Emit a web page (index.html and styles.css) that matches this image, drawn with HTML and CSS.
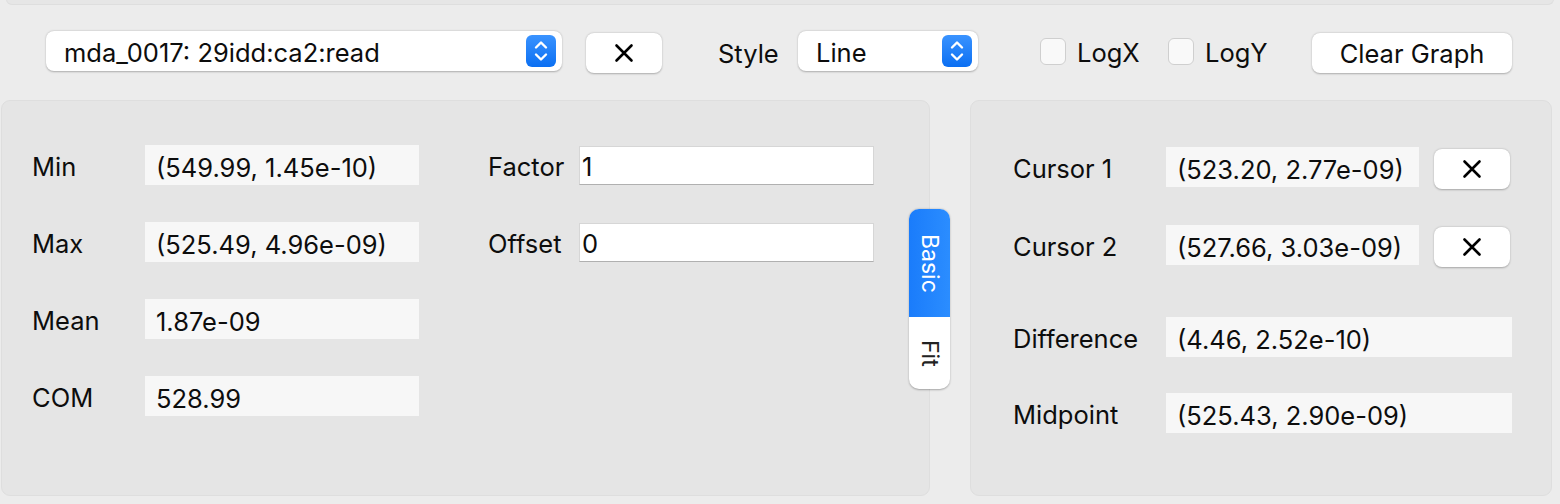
FILE: index.html
```html
<!DOCTYPE html>
<html>
<head>
<meta charset="utf-8">
<link rel="stylesheet" href="styles.css">
</head>
<body>
<div class="top-strip"></div>
<div class="toolbar">
  <div class="combo combo-signal">
    <span class="combo-text">mda_0017: 29idd:ca2:read</span>
    <span class="combo-arrows"><svg width="30" height="32" viewBox="0 0 30 32"><path d="M10 12.5 L15 7.5 L20 12.5 M10 19.5 L15 24.5 L20 19.5" fill="none" stroke="#fff" stroke-width="2.4" stroke-linecap="round" stroke-linejoin="round"/></svg></span>
  </div>
  <button class="btn btn-x btn-x-signal"><svg width="20" height="20" viewBox="0 0 20 20"><path d="M2.5 2.5 L17.5 17.5 M17.5 2.5 L2.5 17.5" stroke="#000" stroke-width="2.6" stroke-linecap="round"/></svg></button>
  <span class="tb-label style-label">Style</span>
  <div class="combo combo-style">
    <span class="combo-text">Line</span>
    <span class="combo-arrows"><svg width="30" height="32" viewBox="0 0 30 32"><path d="M10 12.5 L15 7.5 L20 12.5 M10 19.5 L15 24.5 L20 19.5" fill="none" stroke="#fff" stroke-width="2.4" stroke-linecap="round" stroke-linejoin="round"/></svg></span>
  </div>
  <label class="check check-x"><span class="box"></span><span class="tb-label">LogX</span></label>
  <label class="check check-y"><span class="box"></span><span class="tb-label">LogY</span></label>
  <button class="btn btn-clear"><span class="btn-text">Clear Graph</span></button>
</div>
<div class="main">
  <div class="panel panel-left">
    <div class="col col-stats">
      <div class="row"><span class="lbl lbl-stat">Min</span><span class="val val-stat">(549.99, 1.45e-10)</span></div>
      <div class="row"><span class="lbl lbl-stat">Max</span><span class="val val-stat">(525.49, 4.96e-09)</span></div>
      <div class="row"><span class="lbl lbl-stat">Mean</span><span class="val val-stat">1.87e-09</span></div>
      <div class="row"><span class="lbl lbl-stat">COM</span><span class="val val-stat">528.99</span></div>
    </div>
    <div class="col col-scale">
      <div class="row"><span class="lbl lbl-scale">Factor</span><span class="input">1</span></div>
      <div class="row"><span class="lbl lbl-scale">Offset</span><span class="input">0</span></div>
    </div>
    <div class="tabs">
      <span class="tab tab-active">Basic</span>
      <span class="tab">Fit</span>
    </div>
  </div>
  <div class="panel panel-right">
    <div class="col col-cursors">
      <div class="row"><span class="lbl lbl-cur">Cursor 1</span><span class="val val-cur">(523.20, 2.77e-09)</span><button class="btn btn-x btn-x-cur"><svg width="20" height="20" viewBox="0 0 20 20"><path d="M2.5 2.5 L17.5 17.5 M17.5 2.5 L2.5 17.5" stroke="#000" stroke-width="2.6" stroke-linecap="round"/></svg></button></div>
      <div class="row"><span class="lbl lbl-cur">Cursor 2</span><span class="val val-cur">(527.66, 3.03e-09)</span><button class="btn btn-x btn-x-cur"><svg width="20" height="20" viewBox="0 0 20 20"><path d="M2.5 2.5 L17.5 17.5 M17.5 2.5 L2.5 17.5" stroke="#000" stroke-width="2.6" stroke-linecap="round"/></svg></button></div>
    </div>
    <div class="col col-derived">
      <div class="row"><span class="lbl lbl-cur">Difference</span><span class="val val-wide">(4.46, 2.52e-10)</span></div>
      <div class="row"><span class="lbl lbl-cur">Midpoint</span><span class="val val-wide">(525.43, 2.90e-09)</span></div>
    </div>
  </div>
</div>
</body>
</html>
```
FILE: styles.css
```css
* { box-sizing: border-box; }
html, body { margin: 0; padding: 0; }
body {
  width: 1560px;
  height: 504px;
  overflow: hidden;
  background: #ececec;
  font-family: Inter, "Liberation Sans", Arial, sans-serif;
  font-size: 25.5px;
  color: #0d0d0d;
}
.top-strip {
  height: 6px;
  margin: -1px 6px 0 6px;
  background: #e6e6e6;
  border: 1px solid #dedede;
  border-top: none;
  border-radius: 0 0 9px 9px;
}
.toolbar {
  height: 95px;
  display: flex;
  align-items: flex-start;
  padding-top: 26px;
}
.combo {
  height: 40px;
  background: #fff;
  border-radius: 8px;
  box-shadow: 0 0.5px 2px rgba(0,0,0,0.28);
  display: flex;
  align-items: center;
  justify-content: space-between;
  padding: 0 6px 0 18px;
}
.combo-signal { margin-left: 46px; width: 516px; }
.combo-style { width: 180px; }
.combo-text { line-height: 1; padding-top: 4px; }
.combo-arrows {
  width: 30px;
  height: 32px;
  border-radius: 6px;
  background: linear-gradient(#3a93ff, #0b6ff2);
  display: flex;
}
.btn {
  height: 40px;
  margin-top: 2px;
  background: #fff;
  border: none;
  border-radius: 8px;
  box-shadow: 0 0.5px 2px rgba(0,0,0,0.28);
  font-family: inherit;
  font-size: 25.5px;
  color: #0d0d0d;
  display: flex;
  align-items: center;
  justify-content: center;
  padding: 0;
}
.btn-text { line-height: 1; padding-top: 2px; }
.btn-x { width: 76px; }
.btn-x-signal { margin-left: 24px; }
.tb-label { line-height: 40px; padding-top: 3px; }
.style-label { margin-left: 56px; width: 80px; }
.check { display: flex; align-items: center; height: 40px; }
.check-x { margin-left: 62px; width: 128px; }
.check-y { width: 144px; }
.box {
  width: 26px;
  height: 27px;
  background: #f9f9f9;
  border: 1px solid #cfcfcf;
  border-radius: 6px;
  margin-right: 11px;
  margin-top: 1px;
}
.btn-clear { width: 200px; }

.main {
  display: flex;
  gap: 40px;
  padding-left: 1px;
}
.panel {
  height: 396px;
  background: #e5e5e5;
  border: 1px solid #dedede;
  border-radius: 9px;
  position: relative;
}
.panel-left { width: 929px; display: flex; padding: 44px 0 0 30px; }
.panel-right { width: 582px; padding: 46px 0 0 42px; }
.col { display: flex; flex-direction: column; }
.col-stats { gap: 37px; }
.col-scale { gap: 37px; margin-left: 69px; }
.row { display: flex; align-items: center; height: 40px; }
.lbl { line-height: 1; padding-top: 4px; }
.lbl-stat { width: 113px; }
.lbl-scale { width: 91px; }
.lbl-cur { width: 153px; }
.val {
  height: 40px;
  background: #f7f7f7;
  display: flex;
  align-items: center;
  padding: 4px 0 0 11px;
}
.val-stat { width: 274px; }
.val-cur { width: 253px; }
.val-wide { width: 346px; }
.input {
  width: 295px;
  height: 39px;
  background: #fff;
  border: 1px solid #d6d6d6;
  border-bottom: 1px solid #b0b0b0;
  display: flex;
  align-items: center;
  padding: 3px 0 0 2px;
}
.col-cursors { gap: 38px; }
.btn-x-cur { margin-left: 15px; margin-top: 4px; }
.col-derived { gap: 36px; margin-top: 52px; }

.tabs {
  position: absolute;
  left: 907px;
  top: 108px;
  width: 41px;
  height: 180px;
  display: flex;
  flex-direction: column;
  border-radius: 10px;
  overflow: hidden;
  background: #fff;
  box-shadow: 0 0.5px 2px rgba(0,0,0,0.3);
}
.tab {
  writing-mode: vertical-rl;
  font-size: 23px;
  display: flex;
  align-items: center;
  justify-content: center;
  color: #222;
  height: 72px;
}
.tab-active {
  height: 108px;
  background: linear-gradient(90deg, #1a7cfb, #2b8dff);
  color: #fff;
}
```
